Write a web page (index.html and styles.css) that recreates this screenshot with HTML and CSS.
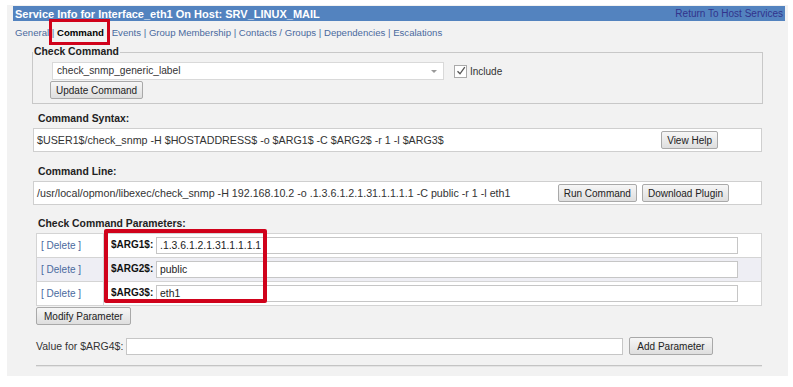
FILE: index.html
```html
<!DOCTYPE html>
<html lang="en">
<head>
  <meta charset="UTF-8" />
  <title>Service Info – Command</title>
  <link rel="stylesheet" href="styles.css">
</head>
<body>
  <div class="panel">
    <!-- Title bar -->
    <div class="title-bar">
      <span class="title">Service Info for Interface_eth1 On Host: SRV_LINUX_MAIL</span>
      <a class="return-link" href="#">Return To Host Services</a>
    </div>

    <!-- Tabs -->
    <div class="tabs">
      <a href="#">General</a> | <span class="tab-current">Command</span> | <a href="#">Events</a> | <a href="#">Group Membership</a> | <a href="#">Contacts / Groups</a> | <a href="#">Dependencies</a> | <a href="#">Escalations</a>
    </div>

    <div class="content">
      <fieldset class="check-command">
        <legend>Check Command</legend>
        <div class="select-row">
          <div class="select">check_snmp_generic_label</div>
          <label class="include">
            <span class="checkbox">
              <svg width="10" height="10" viewBox="0 0 10 10"><path d="M1.5 5.2 L4 7.8 L8.8 1.2" fill="none" stroke="#555" stroke-width="1.3"/></svg>
            </span>
            Include
          </label>
        </div>
        <button class="btn update-btn">Update Command</button>
      </fieldset>

      <div class="section syntax">
        <div class="section-label">Command Syntax:</div>
        <div class="cmd-box help-box">
          <span>$USER1$/check_snmp -H $HOSTADDRESS$ -o $ARG1$ -C $ARG2$ -r 1 -l $ARG3$</span>
          <button class="btn">View Help</button>
        </div>
      </div>

      <div class="section">
        <div class="section-label">Command Line:</div>
        <div class="cmd-box run-box">
          <span>/usr/local/opmon/libexec/check_snmp -H 192.168.10.2 -o .1.3.6.1.2.1.31.1.1.1.1 -C public -r 1 -l eth1</span>
          <span class="btn-group">
            <button class="btn">Run Command</button>
            <button class="btn">Download Plugin</button>
          </span>
        </div>
      </div>

      <div class="section params">
        <div class="section-label">Check Command Parameters:</div>
        <div class="param-wrap">
          <table class="param-table">
            <tr>
              <td class="del-cell">[ <a href="#">Delete</a> ]</td>
              <td class="arg-cell"><b>$ARG1$:</b> <input class="arg-input" value=".1.3.6.1.2.1.31.1.1.1.1"></td>
            </tr>
            <tr class="alt">
              <td class="del-cell">[ <a href="#">Delete</a> ]</td>
              <td class="arg-cell"><b>$ARG2$:</b> <input class="arg-input" value="public"></td>
            </tr>
            <tr>
              <td class="del-cell">[ <a href="#">Delete</a> ]</td>
              <td class="arg-cell"><b>$ARG3$:</b> <input class="arg-input" value="eth1"></td>
            </tr>
          </table>
          <div class="highlight params-highlight"></div>
        </div>
        <button class="btn btn-wide modify-btn">Modify Parameter</button>
      </div>

      <div class="new-param">
        <span>Value for $ARG4$:</span>
        <input class="new-input" value="">
        <button class="btn btn-wide">Add Parameter</button>
      </div>

      <div class="divider"></div>
    </div>
  </div>
</body>
</html>
```

FILE: styles.css
```css
html, body {
  margin: 0;
  padding: 0;
  background: #fff;
}

body {
  font-family: 'Liberation Sans', Arial, sans-serif;
  font-size: 10px;
  color: #333;
}

a {
  color: #4a6a9e;
  text-decoration: none;
}

.panel {
  width: 772px;
  margin: 5px 0 0 7px;
  padding: 1px 3px 9px 6px;
  background: #f2f2f2;
}

.title-bar {
  display: flex;
  justify-content: space-between;
  align-items: center;
  height: 15px;
  padding: 0 2px;
  background: #5383bf;
}

.title {
  color: #fff;
  font-weight: bold;
  font-size: 11px;
}

.return-link {
  color: #32338c;
  font-size: 10px;
}

.tabs {
  padding: 5px 0 0 2px;
  line-height: 14px;
  font-size: 9.6px;
  color: #4a6a9e;
}

.tab-current {
  position: relative;
  color: #000;
  font-weight: bold;
}

/* red annotation boxes drawn over the page */
.tab-current::after {
  content: '';
  position: absolute;
  left: -8px;
  right: -6px;
  top: -8px;
  bottom: -7px;
  border: 3px solid #d0021b;
}

.highlight {
  position: absolute;
  border: 4px solid #d0021b;
  border-radius: 2px;
}

.params-highlight {
  left: 68px;
  top: -4px;
  width: 155px;
  height: 66px;
}

.content {
  padding-left: 20px;
  width: 729px;
}

.check-command {
  margin: 5px 0 0 -1px;
  padding: 3px 0 4px 0;
  border: 1px solid #c8c8c8;
  width: 729px;
}

.check-command legend {
  padding: 0 1px;
  font-weight: bold;
  font-size: 10.4px;
  line-height: 14px;
  color: #222;
}

.select-row {
  display: flex;
  align-items: center;
  margin-left: 19px;
}

.select {
  position: relative;
  width: 386px;
  height: 16px;
  line-height: 16px;
  padding-left: 4px;
  background: #fff;
  border: 1px solid #d9d9d9;
  font-size: 10.2px;
}

.select::after {
  content: '';
  position: absolute;
  right: 6px;
  top: 7px;
  border-left: 3px solid transparent;
  border-right: 3px solid transparent;
  border-top: 3px solid #999;
}

.include {
  display: flex;
  align-items: center;
  margin-left: 10px;
  gap: 3px;
  font-size: 10px;
}

.checkbox {
  display: inline-flex;
  align-items: center;
  justify-content: center;
  width: 11px;
  height: 11px;
  border: 1px solid #aaa;
  background: #fff;
}

.btn {
  height: 18px;
  padding: 0 5px;
  border: 1px solid #a9a9a9;
  border-radius: 2px;
  background: linear-gradient(#f6f6f6, #dedede);
  font-family: 'Liberation Sans', Arial, sans-serif;
  font-size: 10px;
  color: #222;
}

.btn-wide {
  padding: 0 7px;
}

.update-btn {
  margin: 1px 0 0 17px;
}

.section {
  margin-top: 13px;
}

.section.syntax {
  margin-top: 8px;
}

.section.params {
  margin-top: 12px;
}

.section-label {
  padding-left: 5px;
  line-height: 14px;
  margin-bottom: 2px;
  font-weight: bold;
  font-size: 10.4px;
  color: #222;
}

.cmd-box {
  display: flex;
  justify-content: space-between;
  align-items: center;
  height: 22px;
  padding: 0 32px 0 3px;
  background: #fff;
  border: 1px solid #cfcfcf;
  font-size: 10.7px;
}

.help-box {
  padding-right: 43px;
}

.btn-group {
  display: flex;
  gap: 5px;
}

.param-wrap {
  position: relative;
  margin-left: 3px;
  width: 726px;
}

.param-table {
  width: 726px;
  border-collapse: collapse;
  background: #fff;
  border: 1px solid #d4d4d4;
}

.param-table td {
  height: 23px;
  padding: 0;
  border-top: 1px solid #d4d4d4;
}

.param-table tr.alt td {
  background: #eeeef4;
}

.del-cell {
  width: 62px;
  padding-left: 4px !important;
  border-right: 1px solid #d4d4d4;
  color: #4a6a9e;
}

.arg-cell {
  padding-left: 7px !important;
  color: #111;
}

.arg-input, .new-input {
  height: 15px;
  padding: 0 3px;
  border: 1px solid #c6c6c6;
  background: #fff;
  font-family: 'Liberation Sans', Arial, sans-serif;
  font-size: 10.4px;
  color: #222;
  vertical-align: middle;
}

.arg-input {
  width: 574px;
}

.modify-btn {
  display: block;
  margin: 1px 0 0 3px;
}

.new-param {
  display: flex;
  align-items: center;
  margin: 12px 0 0 3px;
  gap: 3px;
  font-size: 10.5px;
}

.new-input {
  width: 489px;
  margin-right: 3px;
}

.divider {
  margin: 10px 0 0 3px;
  width: 726px;
  height: 2px;
  background: #c4c4c4;
  border-bottom: 1px solid #e4e4e4;
  box-sizing: border-box;
}
```
